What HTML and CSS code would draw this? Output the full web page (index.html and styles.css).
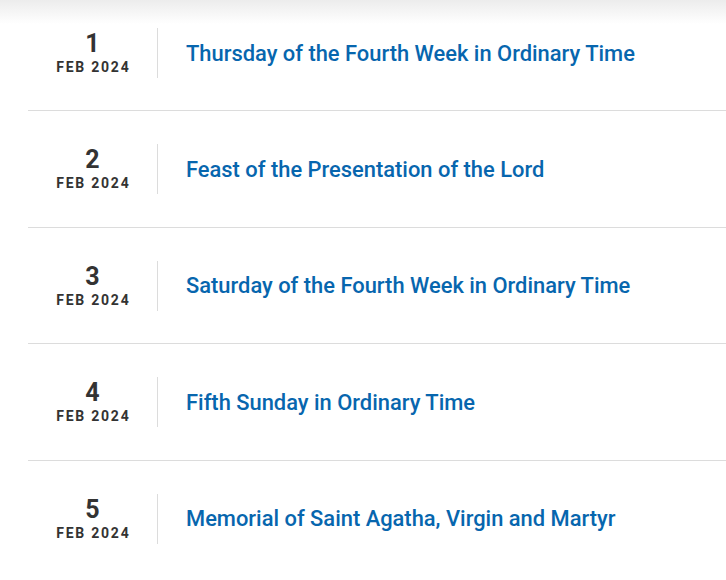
FILE: index.html
```html
<!DOCTYPE html>
<html lang="en">
<head>
<meta charset="utf-8">
<title>Calendar</title>
<link rel="stylesheet" href="styles.css">
</head>
<body>
<div class="top-shadow"></div>
<ul class="days">
  <li class="day">
    <div class="date"><span class="num">1</span><span class="month">FEB 2024</span></div>
    <a class="title" href="#">Thursday of the Fourth Week in Ordinary Time</a>
  </li>
  <li class="day">
    <div class="date"><span class="num">2</span><span class="month">FEB 2024</span></div>
    <a class="title" href="#">Feast of the Presentation of the Lord</a>
  </li>
  <li class="day">
    <div class="date"><span class="num">3</span><span class="month">FEB 2024</span></div>
    <a class="title" href="#">Saturday of the Fourth Week in Ordinary Time</a>
  </li>
  <li class="day">
    <div class="date"><span class="num">4</span><span class="month">FEB 2024</span></div>
    <a class="title" href="#">Fifth Sunday in Ordinary Time</a>
  </li>
  <li class="day">
    <div class="date"><span class="num">5</span><span class="month">FEB 2024</span></div>
    <a class="title" href="#">Memorial of Saint Agatha, Virgin and Martyr</a>
  </li>
</ul>
</body>
</html>
```

FILE: styles.css
```css
html, body {
  margin: 0;
  padding: 0;
  background: #fff;
  font-family: Roboto, "Liberation Sans", Arial, sans-serif;
}

.top-shadow {
  position: absolute;
  top: 0;
  left: 0;
  right: 0;
  height: 24px;
  background: linear-gradient(to bottom, #ececec 0%, rgba(255,255,255,0) 100%);
  pointer-events: none;
}

.days {
  list-style: none;
  margin: 0 0 0 28px;
  padding: 0;
}

.day {
  display: flex;
  align-items: center;
  padding: 33px 0 32.4px;
  border-bottom: 1px solid #dcdcdc;
}

.day:first-child {
  padding-top: 28px;
}

.day:last-child {
  border-bottom: none;
}

.date {
  width: 130px;
  height: 50px;
  box-sizing: border-box;
  border-right: 1px solid #dcdcdc;
  display: flex;
  flex-direction: column;
  align-items: center;
  justify-content: center;
  color: #333;
  flex: none;
}

.num {
  font-size: 25px;
  font-weight: 700;
  line-height: 26px;
}

.month {
  font-size: 14px;
  font-weight: 700;
  letter-spacing: 1.75px;
  line-height: 16px;
  margin-top: 2px;
  padding-left: 1.75px;
}

.title {
  margin-left: 28px;
  font-size: 21.9px;
  font-weight: 500;
  color: #0766ae;
  text-decoration: none;
}
```
